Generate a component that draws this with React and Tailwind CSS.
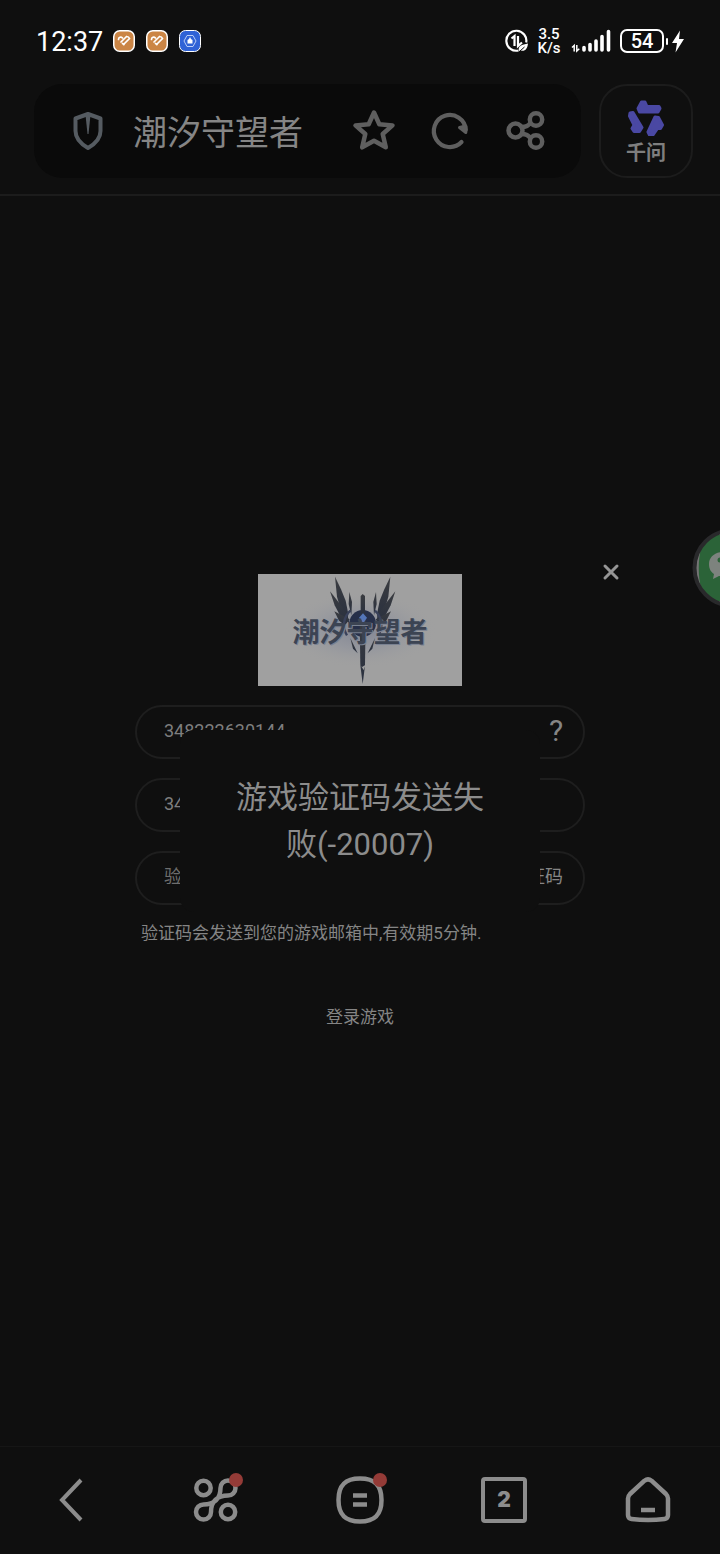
import { useState } from 'react';

const HeartAppIcon = () => (
  <svg viewBox="0 0 22 22" className="h-[22px] w-[22px]">
    <rect x="0.750" y="0.750" width="20.500" height="20.500" rx="6" fill="#cb8545" stroke="#fff" strokeWidth="1.500" />
    <path
      d="M5.500 9.500C5.500 7 8 6.500 9.500 8M8 12l5.500-5.500M10.500 14.500l6-6c-.5-1.500-1.500-2-3-2M11 14.500l-1.500-1"
      fill="none"
      stroke="#fff"
      strokeWidth="1.700"
      strokeLinecap="round"
    />
  </svg>
);

const StatusBar = () => (
  <div className="flex h-[84px] items-center justify-between pb-[2px] pl-[36px] pr-[36px] text-white">
    <div className="flex items-center gap-[11px]">
      <span className="w-[66px] whitespace-nowrap pt-[2px] text-[27px] leading-8">12:37</span>
      <HeartAppIcon />
      <HeartAppIcon />
      <svg viewBox="0 0 22 22" className="h-[22px] w-[22px]">
        <rect x="0.5" y="0.5" width="21" height="21" rx="6" fill="#2f62d6" stroke="#fff" />
        <path d="M8 5.5h6l3 5.5-3 5.5H8L5 11z" fill="none" stroke="#b9cdf7" strokeWidth="1" />
        <path d="M8.5 10l1.500-1 1-2 1 2 1.500 1v3.500h-5z" fill="#fff" />
      </svg>
    </div>

    <div className="flex items-center">
      <svg viewBox="0 0 24 24" className="h-[24px] w-[24px]" fill="none" stroke="#fff" strokeWidth="2.200">
        <path d="M21.200 13.500A10 10 0 1 0 13.500 21.500" />
        <path d="M6.500 9.500L9.500 7v10M13 7v10l4-3.500" />
        <path d="M14 22c-1.500-5 3-6.500 9-7.500-.5 5-3 8.500-7.500 7" fill="#fff" stroke="none" />
        <path d="M15 22l4.500-4" stroke="#0f0f0f" strokeWidth="1" />
      </svg>
      <div className="ml-[7px] w-[26px] text-center text-[15px] font-medium leading-[14px]">
        3.5
        <br />
        K/s
      </div>
      <svg viewBox="0 0 42 24" className="ml-[8px] h-[24px] w-[42px]" fill="none" stroke="#fff">
        <path d="M2 18.500L4.200 16.500v6M6.800 16v6l2.500-2.200" strokeWidth="1.500" />
        <path
          d="M14 18.500v2.500M20 15.500v5.500M26 12v9M32 7.500v13.500M38.500 2.500v18.500"
          strokeWidth="3.600"
          strokeLinecap="round"
        />
      </svg>
      <div className="ml-[8px] flex h-[24px] w-[44px] items-center justify-center rounded-[7px] border-2 border-white text-[20px] font-medium leading-5">
        54
      </div>
      <div className="ml-[2px] h-[7px] w-[2px] rounded-full bg-white" />
      <svg viewBox="0 0 12 22" className="ml-[4px] h-[23px] w-[12px]">
        <path d="M8 0L0 12.500h5L3.500 22 12 8.500H7z" fill="#fff" />
      </svg>
    </div>
  </div>
);

const AddressBar = () => (
  <div className="flex items-center gap-[18px] pl-[34px] pr-[27px]">
    <div className="flex h-[94px] min-w-0 flex-1 items-center rounded-[28px] bg-[#0a0a0a] pl-[38px] pr-[33px]">
      <svg viewBox="0 0 32 40" className="h-[40px] w-[32px] shrink-0">
        <path
          d="M16 3L28.500 7.500V20c0 8-5.500 13-12.500 17C9 33 3.500 28 3.500 20V7.500z"
          fill="none"
          stroke="#555b61"
          strokeWidth="4"
          strokeLinejoin="round"
        />
        <path d="M13.500 4h5L16.500 23h-1z" fill="#555b61" />
      </svg>
      <h1 className="ml-[29px] flex-1 whitespace-nowrap pt-[4px] text-[34px] leading-[52px] text-[#858585]">潮汐守望者</h1>
      <div className="flex gap-[32px] text-[#5f5f5f]">
        <button type="button" aria-label="收藏">
          <svg viewBox="0 0 44 44" className="h-[44px] w-[44px]" fill="none" stroke="currentColor" strokeWidth="4.500" strokeLinejoin="round">
            <path d="M22 3.500l5.300 11.700 13.200 1.200-9.800 8.600 3.100 13.300L22 31.700 10.200 38.300l3.100-13.300-9.800-8.600 13.200-1.200z" />
          </svg>
        </button>
        <button type="button" aria-label="刷新">
          <svg viewBox="0 0 44 44" className="h-[44px] w-[44px]" fill="none" stroke="currentColor" strokeWidth="4.200" strokeLinecap="round">
            <path d="M33.500 33A16 16 0 1 1 37.800 21" />
            <path d="M31.500 18.500l6.300 5V17z" strokeWidth="3" strokeLinejoin="round" fill="currentColor" />
          </svg>
        </button>
        <button type="button" aria-label="分享">
          <svg viewBox="0 0 44 44" className="h-[44px] w-[44px]" fill="none" stroke="currentColor" strokeWidth="4.500">
            <circle cx="11.500" cy="21.500" r="7" />
            <circle cx="32" cy="10.500" r="6.200" />
            <circle cx="32" cy="32.500" r="6.200" />
            <path d="M17.500 18c5 0 6.500-1.500 9-4M17.500 25c5 0 6.500 1.500 9 4" />
          </svg>
        </button>
      </div>
    </div>
    <button
      type="button"
      className="flex h-[94px] w-[94px] flex-col items-center rounded-[28px] border-2 border-[#1c1c1c] pt-[14px] text-[#7e7e7e]"
    >
      <svg viewBox="0 0 36 36" className="h-[36px] w-[36px]" fill="#4a48a3" stroke="#4a48a3" strokeWidth="3" strokeLinejoin="round">
        <path d="M10 8.500l3.500-6.500h3.500l2 4.500h12l1 2-2 3.500H11.500z" />
        <path d="M2 13l3-.5 9 15-2.500 4H6l-2-3 2-3.500-4.500-9z" />
        <path d="M27 17l3.500.5 4 7.500-2 3.500h-3l-4.500 6.500h-3.500l-1.500-3z" />
      </svg>
      <span className="mt-[5px] text-[20px] font-bold leading-6">千问</span>
    </button>
  </div>
);

const Feathers = () => (
  <g>
    <path d="M150 20l18 38 14 34 8 40-4 24-16-28-14-48z" />
    <path d="M135 64l30 38 22 32 6 24-26-18-18-34z" />
    <path d="M193 66l8 30-2 40-8-34z" />
    <path d="M148 124l46 24-14 18-18-14z" />
    <path d="M196 204l22 46-14-14z" />
  </g>
);

const GameLogo = () => (
  <div className="relative flex h-[112px] w-[204px] items-center justify-center overflow-hidden bg-[#a0a0a0]">
    <svg viewBox="-81 12 612 336" className="absolute inset-0 h-full w-full" aria-hidden="true">
      <defs>
        <radialGradient id="glow">
          <stop offset="0" stopColor="#6c728a" stopOpacity="0.6" />
          <stop offset="0.5" stopColor="#858a9a" stopOpacity="0.4" />
          <stop offset="1" stopColor="#a0a0a0" stopOpacity="0" />
        </radialGradient>
        <linearGradient id="steel" x1="0" y1="0" x2="0" y2="1">
          <stop offset="0" stopColor="#3a3c40" />
          <stop offset="1" stopColor="#29303f" />
        </linearGradient>
      </defs>
      <ellipse cx="228" cy="180" rx="230" ry="115" fill="url(#glow)" />
      <g fill="url(#steel)">
        <Feathers />
        <g transform="translate(466 0) scale(-1 1)">
          <Feathers />
        </g>
        <circle cx="233" cy="160" r="40" fill="#27304a" />
        <path d="M186 196a58 58 0 0 1 10-74M280 196a58 58 0 0 0-10-74" fill="none" stroke="#39415a" strokeWidth="7" />
        <path d="M227 78l6-6 7 6v60h-13z" />
        <path d="M224 150h18l-2 136-7 56-7-56z" />
        <path d="M222 278l8 14 12-8-6 16z" fill="#a0a0a0" />
        <path d="M222 143l12-13 12 13-12 18z" fill="#5476b8" />
      </g>
    </svg>
    <span className="relative pt-[6px] text-[27px] font-bold leading-10 text-[#3c4453] [text-shadow:1px_1px_0_#7a8292]">
      潮汐守望者
    </span>
  </div>
);

const fieldClass = 'flex h-[54px] items-center rounded-full border-2 border-[#1e1e1e] pb-[2px] pl-[27px] pr-[20px]';
const inputClass = 'w-full min-w-0 flex-1 bg-transparent text-[18px] leading-6 text-[#7e7e7e] outline-none placeholder:text-[#6e6e6e]';

const LoginDialog = () => {
  const [account, setAccount] = useState('348222630144');
  const [confirm, setConfirm] = useState('348222630144');
  const [code, setCode] = useState('');

  return (
    <form className="relative flex w-[62.5%] flex-col items-center pb-[24px]" onSubmit={(e) => e.preventDefault()}>
      <button type="button" aria-label="关闭" className="absolute -right-[38px] -top-[14px] p-[2px]">
        <svg viewBox="0 0 20 20" className="h-[20px] w-[20px]" stroke="#969696" strokeWidth="3" strokeLinecap="round">
          <path d="M4 4l12 12M16 4L4 16" />
        </svg>
      </button>

      <GameLogo />

      <div className="mt-[19px] flex w-full flex-col gap-[19px]">
        <div className={fieldClass}>
          <input aria-label="账号" className={inputClass} value={account} onChange={(e) => setAccount(e.target.value)} />
          <button type="button" aria-label="帮助" className="w-[14px] text-[30px] leading-8 text-[#858585]">
            ?
          </button>
        </div>
        <div className={fieldClass}>
          <input aria-label="确认账号" className={inputClass} value={confirm} onChange={(e) => setConfirm(e.target.value)} />
        </div>
        <div className={fieldClass}>
          <input
            aria-label="验证码"
            placeholder="验证码"
            className={inputClass}
            value={code}
            onChange={(e) => setCode(e.target.value)}
          />
          <button type="button" className="shrink-0 text-[18px] leading-6 text-[#858585]">
            获取验证码
          </button>
        </div>
      </div>

      <p className="mt-[16px] w-full whitespace-nowrap pl-[6px] text-[17px] leading-6 text-[#858585]">
        验证码会发送到您的游戏邮箱中,有效期5分钟.
      </p>

      <button type="submit" className="mt-[46px] h-[54px] px-[28px] text-[17px] text-[#858585]">
        登录游戏
      </button>
    </form>
  );
};

// Floating shortcut, docked half outside the right edge
const ChatBubble = () => (
  <button type="button" aria-label="微信" className="absolute -right-[52px] top-[332px] h-[80px] w-[80px]">
    <svg viewBox="0 0 80 80" className="h-[80px] w-[80px]">
      <circle cx="40" cy="40" r="38" fill="#747474" />
      <path d="M9 20C6 32 6 48 9 60l13 13h40V7H22z" fill="#2b6338" />
      <circle cx="40" cy="40" r="37.500" fill="none" stroke="#29292b" strokeWidth="4" />
      <path d="M32 24c-9 0-15 5-15 12 0 5 2 8 5 10l-1 5 6-3h12V24z" fill="#7d837e" />
      <circle cx="28" cy="32" r="2.500" fill="#2b6338" />
    </svg>
  </button>
);

const NavDot = () => <span className="absolute -right-[3px] -top-[3px] h-[14px] w-[14px] rounded-full bg-[#943b37]" />;

const BottomNav = () => (
  <nav className="grid h-[108px] grid-cols-5 place-items-center border-t border-[#161616] pb-[2px] text-[#8c8c8c]">
    <button type="button" aria-label="返回">
      <svg viewBox="0 0 48 48" className="h-[48px] w-[48px]" fill="none" stroke="currentColor" strokeWidth="4">
        <path d="M33 4L14 24 33 44" />
      </svg>
    </button>
    <button type="button" aria-label="应用" className="relative">
      <svg viewBox="0 0 48 48" className="h-[48px] w-[48px]" fill="none" stroke="currentColor" strokeWidth="4.500">
        <circle cx="11.500" cy="12" r="7.200" />
        <circle cx="36" cy="36" r="7.200" />
        <path
          d="M19 36a7.500 7.500 0 1 1-7.500-7.500C22 28.500 28.500 23 28.500 12A7.500 7.500 0 1 1 36 19.500C25.500 19.500 19 25 19 36z"
          strokeLinejoin="round"
        />
      </svg>
      <NavDot />
    </button>
    <button type="button" aria-label="菜单" className="relative">
      <svg viewBox="0 0 48 48" className="h-[48px] w-[48px]" fill="none" stroke="currentColor" strokeWidth="4.500">
        <path d="M24 2.500C38.500 2.500 45.500 9 45.500 24S38.500 45.500 24 45.500 2.500 39 2.500 24 9.500 2.500 24 2.500z" />
        <path d="M17 19.500h14M17 28.500h14" />
      </svg>
      <NavDot />
    </button>
    <button
      type="button"
      aria-label="窗口"
      className="flex h-[46px] w-[46px] items-center justify-center rounded-[4px] border-4 border-[#8c8c8c] font-['Inter'] text-[21px] font-black leading-6"
    >
      2
    </button>
    <button type="button" aria-label="主页">
      <svg viewBox="0 0 48 48" className="h-[48px] w-[48px]" fill="none" stroke="currentColor" strokeWidth="4.500" strokeLinejoin="round">
        <path d="M20.500 4.700Q24 2 27.500 4.700L42 18Q44 20 44 22.500V39Q44 42.500 40.500 43Q24 45 7.500 43Q4 42.500 4 39V22.500Q4 20 6 18z" />
        <path d="M17 34h14" />
      </svg>
    </button>
  </nav>
);

const App = () => (
  <div className="flex min-h-screen flex-col overflow-hidden bg-[#0f0f0f] font-[Roboto,'Noto_Sans_CJK_SC',sans-serif]">
    <header className="border-b-2 border-[#1c1c1c] pb-[16px]">
      <StatusBar />
      <AddressBar />
    </header>

    <main className="relative flex flex-1 items-center justify-center">
      <LoginDialog />
      <ChatBubble />

      {/* Toast, covers the form while visible */}
      <div className="pointer-events-none absolute inset-0 flex items-center justify-center">
        <div
          role="alert"
          className="w-1/2 rounded-[14px] bg-[#0f0f0f] px-[50px] pb-[44px] pt-[44px] text-center text-[31px] leading-[47px] text-[#8c8c8c]"
        >
          游戏验证码发送失败(-20007)
        </div>
      </div>
    </main>

    <BottomNav />
  </div>
);

export default App;
